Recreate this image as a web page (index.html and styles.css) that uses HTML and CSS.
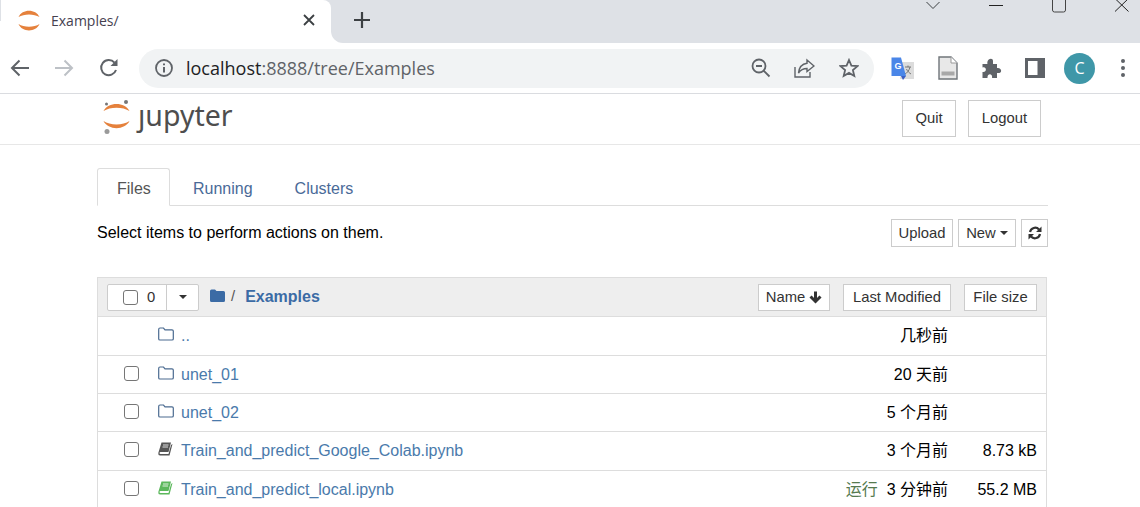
FILE: index.html
```html
<!DOCTYPE html>
<html>
<head>
  <meta charset="UTF-8">
  <title>Examples/</title>
  <link rel="stylesheet" href="styles.css">
</head>
<body>
  <!-- browser tab strip -->
  <div class="tabstrip">
    <div class="browser-tab">
      <svg class="favicon" width="22" height="21" viewBox="0 0 22 21">
        <path d="M0.500 7 C4 -1.500 18 -1.500 21.500 7 C16 3.500 6 3.500 0.500 7Z" fill="#e5813c"/>
        <path d="M0.500 14 C4 22.500 18 22.500 21.500 14 C16 17.500 6 17.500 0.500 14Z" fill="#e5813c"/>
      </svg>
      <span class="tab-title">Examples/</span>
      <svg class="tab-close" width="12" height="12" viewBox="0 0 12 12"><path d="M1 1 L11 11 M11 1 L1 11" stroke="#3c4043" stroke-width="1.8"/></svg>
    </div>
    <div class="strip-rest">
      <svg class="new-tab" width="16" height="16" viewBox="0 0 16 16"><path d="M8 0 V16 M0 8 H16" stroke="#3c4043" stroke-width="2.2"/></svg>
      <div class="window-controls">
        <svg class="wc-chevron" width="14" height="9" viewBox="0 0 14 9"><path d="M0.5 1 L7 7.5 L13.5 1" fill="none" stroke="#3c4043"/></svg>
        <svg class="wc-min" width="14" height="12" viewBox="0 0 14 12"><path d="M0 5.5 H14" stroke="#222"/></svg>
        <svg class="wc-max" width="14" height="13" viewBox="0 0 14 13"><path d="M0.5 -3 V10 Q0.5 12 2.5 12 H11.5 Q13.5 12 13.5 10 V-3" fill="none" stroke="#444"/></svg>
        <svg class="wc-close" width="14" height="12" viewBox="0 0 14 12"><path d="M0 -1.5 L13.5 11.5 M13.5 -1.5 L0 11.5" stroke="#222"/></svg>
      </div>
    </div>
  </div>

  <!-- address bar -->
  <div class="toolbar">
    <svg class="nav-icon" width="20" height="18" viewBox="0 0 20 18"><path d="M19 9 H2 M9.5 1.5 L2 9 L9.5 16.5" fill="none" stroke="#5f6368" stroke-width="2"/></svg>
    <svg class="nav-icon fwd" width="20" height="18" viewBox="0 0 20 18"><path d="M1 9 H18 M10.5 1.5 L18 9 L10.5 16.5" fill="none" stroke="#bdc1c6" stroke-width="2"/></svg>
    <svg class="nav-icon reload" width="20" height="20" viewBox="0 0 20 20"><path d="M17 12 A7.6 7.6 0 1 1 15.5 4.6" fill="none" stroke="#5f6368" stroke-width="2"/><path d="M18.5 1 V8 H11.5Z" fill="#5f6368"/></svg>
    <div class="omnibox">
      <svg class="info" width="18" height="18" viewBox="0 0 18 18"><circle cx="9" cy="9" r="8" fill="none" stroke="#5f6368" stroke-width="1.8"/><path d="M9 8 V13.5 M9 4.5 V6.3" stroke="#5f6368" stroke-width="2"/></svg>
      <span class="url"><span class="host">localhost</span>:8888/tree/Examples</span>
      <svg class="omni-icon zoom" width="20" height="20" viewBox="0 0 20 20"><circle cx="8" cy="8" r="6.5" fill="none" stroke="#5f6368" stroke-width="1.8"/><path d="M5 8 H11 M12.6 12.6 L18.5 18.5" stroke="#5f6368" stroke-width="1.8"/></svg>
      <svg class="omni-icon share" width="21" height="20" viewBox="0 0 21 20"><path d="M1 9 V19 H16 V14" fill="none" stroke="#5f6368" stroke-width="1.4"/><path d="M13 2 L20 8 L13 13.5 V10.5 C9 10.5 6.5 12 4.5 15 C5 10 8 6 13 5.3Z" fill="none" stroke="#5f6368" stroke-width="1.4"/></svg>
      <svg class="omni-icon star" width="20" height="20" viewBox="0 0 20 20"><path d="M10 2 L12.4 7.6 L18.5 8.1 L13.9 12.1 L15.3 18 L10 14.9 L4.7 18 L6.1 12.1 L1.5 8.1 L7.6 7.6Z" fill="none" stroke="#5f6368" stroke-width="1.8"/></svg>
    </div>
    <svg class="ext translate" width="24" height="23" viewBox="0 0 24 23">
      <path d="M11 5 H23 V22 H9Z" fill="#dcdcdc"/>
      <path d="M14 10 H20 M17 8.5 V10 M19 10 C18 14 16 16 14 17 M15.5 12 C16.500 14.500 18.500 16 20 17" fill="none" stroke="#777" stroke-width="1"/>
      <path d="M0.500 0.500 H10 L15 19 H0.500Z" fill="#4a86e8"/>
      <path d="M10 19 H15 L12 23Z" fill="#3b5fc4"/>
      <text x="3.500" y="12" class="g-letter">G</text>
    </svg>
    <svg class="ext doc" width="20" height="24" viewBox="0 0 20 24"><path d="M1 1 H13 L19 7 V23 H1Z" fill="#e8e8e8" stroke="#70757a" stroke-width="1.4"/><path d="M13 1 V7 H19" fill="#fff" stroke="#9a9a9a"/><rect x="3.500" y="15.500" width="13" height="4" fill="#a8a8a8"/></svg>
    <svg class="ext puzzle" width="20" height="20" viewBox="0 0 20 20"><path d="M0.500 6 H5.500 C4 1 11 -1 11 3 V6 H15 V10 C20 9 21 16 15 15 V20 H10 C11 15 5 15 5.500 20 H0.500 V14 C5 15 5 8 0.500 9.500Z" fill="#5f6368"/></svg>
    <svg class="ext panel" width="20" height="20" viewBox="0 0 20 20"><rect width="20" height="20" fill="#5f6368"/><rect x="3" y="3" width="9.500" height="14" fill="#fff"/></svg>
    <div class="avatar">C</div>
    <svg class="ext dots" width="4" height="18" viewBox="0 0 4 18"><circle cx="2" cy="2" r="2" fill="#5f6368"/><circle cx="2" cy="9" r="2" fill="#5f6368"/><circle cx="2" cy="16" r="2" fill="#5f6368"/></svg>
  </div>

  <!-- notebook header -->
  <div class="nb-header">
    <div class="logo">
      <svg width="28" height="36" viewBox="0 0 28 36">
        <circle cx="23" cy="3" r="2" fill="#767677"/>
        <circle cx="3.500" cy="5" r="1.500" fill="#767677"/>
        <circle cx="4" cy="32.500" r="2.500" fill="#9a9a9a"/>
        <path d="M0.500 12 C5 2.500 22 2.500 26.500 12 C20 7.500 7 7.500 0.500 12Z" fill="#e5813c"/>
        <path d="M0.500 22 C5 31.500 22 31.500 26.500 22 C20 26.500 7 26.500 0.500 22Z" fill="#e5813c"/>
      </svg>
      <span class="logo-text">ȷupyter</span>
    </div>
    <div class="header-btns">
      <a class="hbtn quit">Quit</a>
      <a class="hbtn">Logout</a>
    </div>
  </div>

  <div class="container">
    <ul class="nav-tabs">
      <li class="active">Files</li>
      <li>Running</li>
      <li>Clusters</li>
    </ul>

    <div class="actions">
      <span class="hint">Select items to perform actions on them.</span>
      <div class="action-btns">
        <a class="btn">Upload</a>
        <a class="btn">New <i class="caret"></i></a>
        <a class="btn refresh">
          <svg width="14" height="14" viewBox="0 0 14 14"><path d="M2 6 A5.200 5.200 0 0 1 11 3.500 M12 8 A5.200 5.200 0 0 1 3 10.500" fill="none" stroke="#333" stroke-width="2.200"/><path d="M13.500 0.500 V6 H8Z M0.500 13.500 V8 H6Z" fill="#333"/></svg>
        </a>
      </div>
    </div>

    <div class="list">
      <div class="list-head">
        <div class="select-group">
          <div class="select-main"><span class="check"></span><span>0</span></div>
          <div class="select-caret"><i class="caret"></i></div>
        </div>
        <svg class="crumb-folder" width="15" height="13" viewBox="0 0 15 13"><path d="M0 2 Q0 0.500 1.500 0.500 H5 L6.500 2 H13.500 Q15 2 15 3.500 V11.500 Q15 13 13.500 13 H1.500 Q0 13 0 11.500Z" fill="#3b6ba5"/></svg>
        <span class="crumb-sep">/</span>
        <a class="crumb">Examples</a>
        <a class="sort name">Name
          <svg width="13" height="13" viewBox="0 0 13 13"><path d="M6.500 0.500 V10 M1.500 5.500 L6.500 10.500 L11.500 5.500" fill="none" stroke="#333" stroke-width="3"/></svg>
        </a>
        <a class="sort modified">Last Modified</a>
        <a class="sort size">File size</a>
      </div>

      <div class="row tall">
        <span class="check-slot"></span>
        <svg class="item-icon" width="16" height="14" viewBox="0 0 16 14"><path d="M0.700 2.500 Q0.700 1 2 1 H5.500 L7 2.800 H14 Q15.300 2.800 15.300 4 V12 Q15.300 13 14 13 H2 Q0.700 13 0.700 12Z" fill="none" stroke="#4a6a90" stroke-width="1.200"/></svg>
        <a class="item-name">..</a>
        <span class="item-time">几秒前</span>
        <span class="item-size"></span>
      </div>
      <div class="row">
        <span class="check check-slot"></span>
        <svg class="item-icon" width="16" height="14" viewBox="0 0 16 14"><path d="M0.700 2.500 Q0.700 1 2 1 H5.500 L7 2.800 H14 Q15.300 2.800 15.300 4 V12 Q15.300 13 14 13 H2 Q0.700 13 0.700 12Z" fill="none" stroke="#4a6a90" stroke-width="1.200"/></svg>
        <a class="item-name">unet_01</a>
        <span class="item-time">20 天前</span>
        <span class="item-size"></span>
      </div>
      <div class="row">
        <span class="check check-slot"></span>
        <svg class="item-icon" width="16" height="14" viewBox="0 0 16 14"><path d="M0.700 2.500 Q0.700 1 2 1 H5.500 L7 2.800 H14 Q15.300 2.800 15.300 4 V12 Q15.300 13 14 13 H2 Q0.700 13 0.700 12Z" fill="none" stroke="#4a6a90" stroke-width="1.200"/></svg>
        <a class="item-name">unet_02</a>
        <span class="item-time">5 个月前</span>
        <span class="item-size"></span>
      </div>
      <div class="row tall">
        <span class="check check-slot"></span>
        <svg class="item-icon" width="16" height="14" viewBox="0 0 16 14"><path d="M3.500 0.500 H13 L10.500 10 H2.500 Q1.500 10 1.500 11 Q1.500 12 2.500 12 H10.500 L13 3 L14.500 2 L11.500 13.500 H2 Q0 13.500 0.300 11Z" fill="#555"/><path d="M5 3 H10.500 M4.500 5 H10" stroke="#fff" stroke-width="0.800"/></svg>
        <a class="item-name">Train_and_predict_Google_Colab.ipynb</a>
        <span class="item-time">3 个月前</span>
        <span class="item-size">8.73 kB</span>
      </div>
      <div class="row tall">
        <span class="check check-slot"></span>
        <svg class="item-icon" width="16" height="14" viewBox="0 0 16 14"><path d="M3.500 0.500 H13 L10.500 10 H2.500 Q1.500 10 1.500 11 Q1.500 12 2.500 12 H10.500 L13 3 L14.500 2 L11.500 13.500 H2 Q0 13.500 0.300 11Z" fill="#5cb85c"/><path d="M5 3 H10.500 M4.500 5 H10" stroke="#fff" stroke-width="0.800"/></svg>
        <a class="item-name">Train_and_predict_local.ipynb</a>
        <span class="item-status">运行</span>
        <span class="item-time">3 分钟前</span>
        <span class="item-size">55.2 MB</span>
      </div>
    </div>
  </div>
</body>
</html>
```

FILE: styles.css
```css
* {
  box-sizing: border-box;
}

html, body {
  margin: 0;
  height: 507px;
  overflow: hidden;
}

body {
  background: #fff;
  color: #333;
  font-family: "Liberation Sans", Arial, sans-serif;
  font-size: 14.800px;
}

a {
  color: inherit;
  text-decoration: none;
}

/* browser chrome */
.tabstrip {
  display: flex;
  height: 43px;
  background: linear-gradient(to bottom, #dee1e6 50%, #fff 50%);
}

.browser-tab {
  display: flex;
  align-items: center;
  width: 330px;
  margin-left: 1px;
  padding: 0 16px 3px 17px;
  background: #fff;
  border-radius: 0 8px 0 0;
}

.favicon {
  flex: none;
}

.tab-title {
  flex: 1;
  margin-left: 11px;
  color: #45414f;
  font-family: "Open Sans", sans-serif;
  font-size: 14px;
}

.strip-rest {
  display: flex;
  flex: 1;
  align-items: center;
  background: #dee1e6;
  border-radius: 0 0 0 12px;
  padding: 0 0 3px 23px;
}

.window-controls {
  display: flex;
  align-items: flex-start;
  align-self: flex-start;
  margin-left: auto;
}

.window-controls svg {
  display: block;
  overflow: hidden;
}

.wc-chevron {
  margin-right: 49px;
  margin-top: 1px;
}

.wc-min {
  margin-right: 49px;
}

.wc-max {
  margin-right: 49px;
}

.wc-close {
  margin-right: 11px;
}

.toolbar {
  display: flex;
  align-items: center;
  height: 51px;
  padding-left: 10px;
  background: #fff;
  border-bottom: 1px solid #dadce0;
}

.nav-icon {
  flex: none;
}

.fwd {
  margin-left: 24px;
}

.reload {
  margin-left: 25px;
}

.omnibox {
  display: flex;
  align-items: center;
  width: 735px;
  height: 39px;
  margin-left: 20px;
  padding-left: 16px;
  background: #f1f3f4;
  border-radius: 20px;
}

.url {
  margin-left: 13px;
  color: #5f6368;
  font-family: "Open Sans", sans-serif;
  font-size: 18px;
}

.host {
  color: #202124;
}

.zoom {
  margin-left: auto;
}

.share {
  margin-left: 23px;
}

.star {
  margin: 0 15px 0 24px;
}

.translate {
  margin-left: 17px;
}

.doc {
  margin-left: 23px;
}

.puzzle {
  margin-left: 24px;
}

.panel {
  margin-left: 23px;
}

.g-letter {
  fill: #fff;
  font-family: "Liberation Sans", sans-serif;
  font-size: 9px;
  font-weight: bold;
}

.avatar {
  flex: none;
  width: 31px;
  height: 31px;
  margin-left: 19px;
  border-radius: 50%;
  background: #3f97a8;
  color: #fff;
  font-family: "Open Sans", sans-serif;
  font-size: 16px;
  line-height: 31px;
  text-align: center;
}

.dots {
  margin-left: 26px;
}

/* notebook header */
.nb-header {
  display: flex;
  align-items: center;
  justify-content: space-between;
  height: 51px;
  padding: 0 99px 1px 103px;
  border-bottom: 1px solid #e7e7e7;
}

.logo {
  display: flex;
  align-items: center;
  margin-top: -3px;
}

.logo-text {
  margin-left: 7px;
  margin-top: -4px;
  color: #4e4e4e;
  font-family: "Noto Sans", sans-serif;
  font-size: 28.500px;
  line-height: 36px;
}

.header-btns {
  display: flex;
}

.hbtn {
  width: 73px;
  height: 37px;
  border: 1px solid #ccc;
  background: #fff;
  line-height: 35px;
  text-align: center;
}

.quit {
  width: 54px;
  margin-right: 12px;
}

/* file browser */
.container {
  width: 951px;
  margin-left: 97px;
}

.nav-tabs {
  display: flex;
  height: 38px;
  margin: 23px 0 0;
  padding: 0;
  border-bottom: 1px solid #ddd;
  color: #4a6a98;
  font-size: 16px;
  list-style: none;
}

.nav-tabs li {
  height: 37px;
  margin-right: 2px;
  padding: 0 19px;
  border: 1px solid transparent;
  line-height: 39px;
}

.nav-tabs .active {
  width: 73px;
  height: 38px;
  margin-right: 3px;
  border-color: #ddd #ddd #fff;
  border-radius: 3px 3px 0 0;
  background: #fff;
  color: #555;
}

.actions {
  display: flex;
  align-items: center;
  justify-content: space-between;
  height: 28px;
  margin-top: 13px;
}

.hint {
  color: #000;
  font-size: 16px;
}

.action-btns {
  display: flex;
  gap: 5px;
}

.btn {
  display: flex;
  align-items: center;
  justify-content: center;
  width: 58px;
  height: 28px;
  border: 1px solid #ccc;
  background: #fff;
  white-space: pre;
}

.btn:first-child {
  width: 62px;
}

.refresh {
  width: 27px;
}

.caret {
  display: inline-block;
  width: 0;
  height: 0;
  border-top: 4.500px solid #333;
  border-left: 4.500px solid transparent;
  border-right: 4.500px solid transparent;
}

.list {
  width: 950px;
  margin-top: 30px;
  border-left: 1px solid #ddd;
  border-right: 1px solid #ddd;
}

.list-head {
  display: flex;
  align-items: center;
  height: 40px;
  padding: 0 9px;
  background: #eee;
  border-top: 1px solid #ddd;
  border-bottom: 1px solid #ddd;
}

.select-group {
  display: flex;
  width: 92px;
  height: 27px;
  border: 1px solid #ccc;
  background: #fff;
  border-radius: 2px;
}

.select-main {
  display: flex;
  align-items: center;
  flex: 1;
  gap: 9px;
  padding-left: 15px;
  border-right: 1px solid #ccc;
}

.select-caret {
  display: flex;
  align-items: center;
  justify-content: center;
  width: 31px;
}

.check {
  display: block;
  width: 15px;
  height: 15px;
  border: 1.500px solid #767676;
  border-radius: 3px;
  background: #fff;
}

.crumb-folder {
  margin-left: 11px;
  margin-top: -3px;
}

.crumb-sep {
  margin-left: 6px;
  margin-top: -2px;
  color: #555;
}

.crumb {
  margin-left: 10px;
  color: #3b6ba5;
  font-size: 16px;
  font-weight: bold;
}

.sort {
  display: flex;
  align-items: center;
  justify-content: center;
  gap: 4px;
  height: 27px;
  border: 1px solid #ccc;
  background: #fff;
}

.name {
  width: 72px;
  margin-left: auto;
}

.modified {
  width: 108px;
  margin-left: 13px;
}

.size {
  width: 73px;
  margin-left: 13px;
}

.row {
  display: flex;
  align-items: center;
  height: 38px;
  padding-left: 26px;
  border-bottom: 1px solid #ddd;
  color: #000;
}

.tall {
  height: 39px;
}

.check-slot {
  flex: none;
  width: 15px;
  height: 15px;
  margin-top: -2px;
}

.tall .check-slot {
  margin-top: -4px;
}

.item-icon {
  flex: none;
  margin-left: 19px;
  margin-top: -3px;
}

.tall .item-icon {
  margin-top: -5px;
}

.item-name {
  flex: 1;
  margin-left: 7px;
  color: #4a7aab;
  font-size: 16px;
}

.item-status {
  margin-right: 9px;
  color: #557a4f;
  font-family: "Liberation Sans", "Noto Sans CJK SC", sans-serif;
  font-size: 16px;
  line-height: 1;
}

.item-time {
  font-family: "Liberation Sans", "Noto Sans CJK SC", sans-serif;
  font-size: 16px;
  line-height: 1;
}

.item-size {
  flex: none;
  width: 98px;
  padding-right: 9px;
  font-size: 16px;
  line-height: 1;
  text-align: right;
}
```
